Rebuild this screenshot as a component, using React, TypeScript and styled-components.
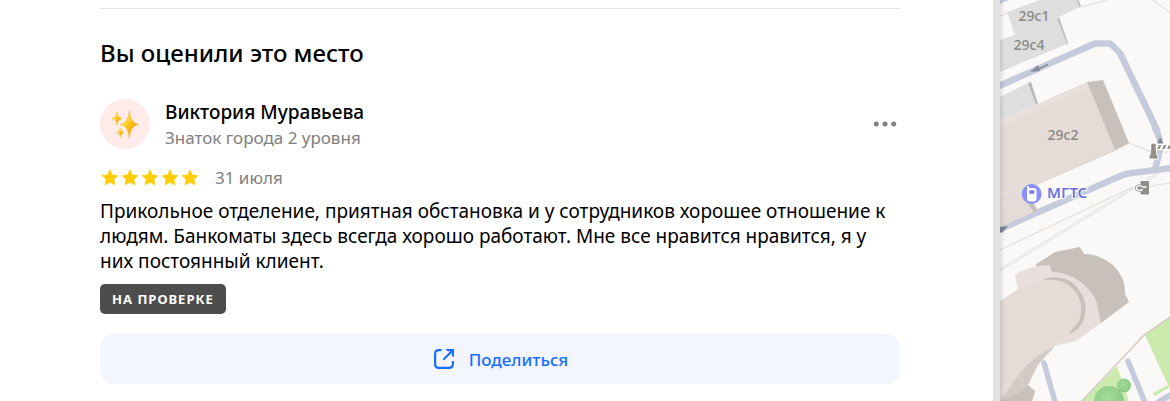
import React from 'react';
import styled, { createGlobalStyle } from 'styled-components';

const GlobalStyle = createGlobalStyle`
  * { box-sizing: border-box; }
  body {
    margin: 0;
    background: #fff;
    color: #000;
    font-family: "Noto Sans", "Open Sans", sans-serif;
  }
`;

const Page = styled.div`
  display: grid;
  grid-template-columns: minmax(0, 1fr) 177px;
  min-height: 100vh;
`;

const Panel = styled.main`
  padding: 8px 93px 16px 100px;
`;

const ReviewSection = styled.section`
  border-top: 1px solid #e6e6e6;
  padding-top: 29px;
`;

const Title = styled.h2`
  margin: 0 0 30px;
  font-size: 24px;
  line-height: 30px;
  font-weight: 500;
`;

const Author = styled.header`
  display: flex;
  align-items: center;
  height: 52px;
`;

const Avatar = styled.svg`
  width: 50px;
  height: 50px;
  margin-right: 15px;
  flex: none;
`;

const AuthorText = styled.div`
  flex: 1;
`;

const Name = styled.div`
  font-size: 19px;
  line-height: 27px;
  font-weight: 500;
`;

const Muted = styled.div`
  font-size: 17px;
  line-height: 24px;
  color: #808080;
`;

const MoreButton = styled.button`
  display: flex;
  width: 30px;
  height: 30px;
  padding: 0;
  border: 0;
  background: none;
  cursor: pointer;
`;

const Rating = styled.div`
  display: flex;
  align-items: center;
  gap: 15px;
  margin-top: 16px;
`;

const Stars = styled.svg`
  width: 100px;
  height: 20px;
`;

const ReviewText = styled.p`
  margin: 9px 0 10px;
  font-size: 19px;
  line-height: 25px;
`;

const Status = styled.span`
  display: block;
  width: fit-content;
  padding: 0 12px;
  border-radius: 5px;
  background: #4d4d4d;
  color: #fff;
  font-size: 13px;
  line-height: 30px;
  font-weight: 700;
  letter-spacing: 1px;
  text-transform: uppercase;
`;

const ShareButton = styled.button`
  display: flex;
  align-items: center;
  justify-content: center;
  gap: 13px;
  width: 100%;
  height: 50px;
  margin-top: 20px;
  padding: 0;
  border: 0;
  border-radius: 14px;
  background: #f3f6ff;
  color: #196dff;
  font-family: inherit;
  font-size: 17px;
  font-weight: 500;
  cursor: pointer;
`;

const MapPane = styled.aside`
  display: flex;
  overflow: hidden;
  border-left: 7px solid #e3e3e3;
  background: #faf9f7;
`;

const MapCanvas = styled.svg`
  width: 100%;
  flex: 1;
  font-family: "Noto Sans", sans-serif;
`;

const HouseLabel = styled.text`
  font-size: 14px;
  font-weight: 500;
  fill: #8a8684;
  text-anchor: middle;
`;

const PlaceLabel = styled.text`
  font-size: 15px;
  font-weight: 600;
  fill: #6a6fe0;
  stroke: #fff;
  stroke-width: 2px;
  paint-order: stroke;
`;

const sparkle = (x: number, y: number, w: number, h: number) =>
  `M${x} ${y - h}Q${x + w * 0.12} ${y - h * 0.1} ${x + w} ${y}Q${x + w * 0.12} ${y + h * 0.1} ${x} ${y + h}Q${x - w * 0.12} ${y + h * 0.1} ${x - w} ${y}Q${x - w * 0.12} ${y - h * 0.1} ${x} ${y - h}Z`;

function SparklesAvatar() {
  return (
    <Avatar viewBox="0 0 50 50" aria-hidden="true">
      <defs>
        <linearGradient id="gold" x1="0" y1="0" x2="1" y2="1">
          <stop offset="0.3" stopColor="#ffe14a" />
          <stop offset="0.5" stopColor="#fcc21b" />
          <stop offset="0.8" stopColor="#f39c12" />
        </linearGradient>
      </defs>
      <circle cx="25" cy="25" r="25" fill="#ffebea" />
      <g fill="url(#gold)" stroke="#fbc02d" strokeWidth="0.7" strokeLinejoin="round">
        <path d={sparkle(29.3, 25.5, 9, 13.5)} />
        <path d={sparkle(17, 19.5, 5, 6.5)} />
        <path d={sparkle(20.5, 33.5, 3.6, 4.8)} />
      </g>
    </Avatar>
  );
}

function FiveStars() {
  return (
    <Stars viewBox="0 0 100 20" role="img" aria-label="Оценка 5 из 5">
      {[10, 30, 50, 70, 90].map((x) => (
        <path
          key={x}
          transform={`translate(${x} 10)`}
          d="M0-8.2 2.4-3 8-2.5 3.9 1.4 5.1 7 0 4.3-5.1 7-3.9 1.4-8-2.5-2.4-3Z"
          fill="#fc0"
          stroke="#fc0"
          strokeWidth="0.6"
          strokeLinejoin="round"
        />
      ))}
    </Stars>
  );
}

function CityMap() {
  return (
    <MapCanvas viewBox="0 0 170 401" preserveAspectRatio="xMinYMin slice" role="img" aria-label="Карта">
      <defs>
        <linearGradient id="edge" x1="0" x2="1" y1="0" y2="0">
          <stop offset="0" stopColor="#000" stopOpacity="0.1" />
          <stop offset="1" stopColor="#000" stopOpacity="0" />
        </linearGradient>
        <radialGradient id="tree" cx="0.45" cy="0.4" r="0.6">
          <stop offset="0" stopColor="#a3dc9b" />
          <stop offset="1" stopColor="#8aca84" />
        </radialGradient>
      </defs>
      <rect width="170" height="401" fill="#faf9f7" />

      <path d="M0 270 160 172 170 165" fill="none" stroke="#efedeb" strokeWidth="3.5" />
      <g fill="none" stroke="#ddd3cd" strokeWidth="1.2" strokeDasharray="1.5 0.8">
        <path d="M0 16 8 13M81 7 107 0M153 0 170 13M129 143 151 152 170 152M0 250 133 187M143 187 170 183" />
      </g>

      <g fill="none" stroke="#c5cbdc" strokeWidth="6.5" strokeLinejoin="round">
        <path d="M-2 1 8 -3" />
        <path d="M-2 86.5 95 43.5H110L120 53 158 132" />
        <path d="M154 126Q162 140 160 149L155 170" />
        <path d="M-2 230 118 177Q126 173 136 172.5L172 168" />
      </g>

      <path d="M77 0 80 7 M58 18 67 44" stroke="#bdbdbd" strokeWidth="2.5" />
      <path d="M7 12 40 0H77L79 7 57 18 67 44 0 72V40L15 35Z" fill="#dedede" />
      <path d="M28 83 31 82 38 104 34 105Z" fill="#b9b7b6" />
      <path d="M0 97 28 83 36 104 0 121Z" fill="#dedede" />

      <path d="M0 121 87 82 116 150 0 200Z" fill="#e5dcd8" />
      <path d="M0 121 87 82 89 87 0 127Z" fill="#e9e0dd" />
      <path d="M87 82 103 80 129 143 115 150Z" fill="#c8c0bb" />
      <path d="M0 200 28 189 34 212 0 227Z" fill="#e5dcd8" />
      <path d="M28 204 33 202 38 211 34 213Z" fill="#c8c0bb" />
      <path d="M0 200.5 116 150 129 143.5" fill="none" stroke="#cdbfb7" strokeWidth="0.8" strokeDasharray="1.5 0.8" />

      <path d="M48 64.5 38 69" stroke="#858b9b" strokeWidth="1.5" />
      <path d="M30 72 38 65 40 71Z" fill="#858b9b" />
      <path d="M0 227 8 226 2 233 0 232Z" fill="#7f8594" />
      <path d="M160 137 164 145H157Z" fill="#7f8594" />

      <g fill="none" stroke="#c5cbdc" strokeWidth="5.5" strokeLinecap="round">
        <path d="M44 363 56 405" />
        <path d="M128 361 146 405" />
      </g>
      <path d="M157 403 172 394" stroke="#c5cbdc" strokeWidth="6" />

      <path d="M35 265 55 252 80 247 84 254Q91 254 97 256 105 259 113 265 126 278 125 294L129 302 101 323 80 310 50 275Z" fill="#c8c0bb" />
      <path d="M15 275 18 273Q32 265 50 265L52 272Q66 272 78 280 97 294 98 309L101 323 76 341 55 346 20 300Z" fill="#e8dfdd" />
      <path d="M44 279Q62 274 74 284 90 300 84 319 80 330 68 335L50 300Z" fill="#c8c0bb" />
      <path d="M0 301 20 288 44 280Q63 278 72 288 86 302 79 321L68 335 55 346 40 360 26 386 0 401Z" fill="#e5dcd8" />
      <path d="M55 346Q32 357 20 373L0 401H32L35 391 28 385 38 365Z" fill="#d3cac5" />
      <path d="M20 393 28 386 35 391 32 401H0Z" fill="#c8c0bb" />

      <path d="M145 335 170 317V387L155 396 153 393 168 385Z" fill="#cbeaae" />
      <path d="M117 366 127 395 129 401H82Z" fill="#cbeaae" />
      <path d="M170 317 144 335 81 402" fill="none" stroke="#d6c9c2" strokeWidth="1.5" />
      <circle cx="109" cy="401" r="15" fill="url(#tree)" />
      <circle cx="124" cy="385.5" r="7" fill="url(#tree)" />

      <g stroke="#fff" strokeWidth="2" fill="#918d89" paintOrder="stroke">
        <path d="M149.500 158.500V155.500H150.500L151.500 147 151 146Q151 143.500 153.500 143.500T156 146L155.500 147 156.500 155.500H157.500V158.500Z" />
        <path d="M157 144.500H170V149H157Z" fill="#fff" />
        <path d="M140.500 181H149V194.500H140.500V191.500H138Q135 191 135 188T138 184.500H140.500Z" />
      </g>
      <path
        d="M157 149 159 145H161.500L159.500 149ZM162 149 164 145H166.500L164.500 149ZM167 149 169 145H171.500L169.500 149Z"
        fill="#918d89"
      />
      <path d="M146.500 187H143.500L141 185.800H138.500Q136.500 186 136.500 188T138.500 190.200H142V188.500" fill="none" stroke="#fff" strokeWidth="1.300" />

      <HouseLabel x="34" y="21">29с1</HouseLabel>
      <HouseLabel x="29" y="50">29с4</HouseLabel>
      <HouseLabel x="63" y="140">29с2</HouseLabel>

      <circle cx="31.7" cy="194" r="9.900" fill="#8890ff" />
      <rect x="27" y="188" width="9.500" height="13.500" rx="3" fill="#fff" />
      <path d="M28 186V191" stroke="#fff" strokeWidth="1.800" />
      <rect x="29.300" y="190.300" width="5" height="3.500" fill="#737bf0" />
      <PlaceLabel x="47" y="198">МГТС</PlaceLabel>

      <rect width="5" height="401" fill="url(#edge)" />
    </MapCanvas>
  );
}

export default function App() {
  return (
    <>
      <GlobalStyle />
      <Page>
        <Panel>
          <ReviewSection>
            <Title>Вы оценили это место</Title>
            <Author>
              <SparklesAvatar />
              <AuthorText>
                <Name>Виктория Муравьева</Name>
                <Muted>Знаток города 2 уровня</Muted>
              </AuthorText>
              <MoreButton type="button" aria-label="Ещё">
                <svg width="30" height="30" viewBox="0 0 30 30" fill="#808080" aria-hidden="true">
                  <circle cx="6.3" cy="15" r="2.5" />
                  <circle cx="15" cy="15" r="2.5" />
                  <circle cx="23.7" cy="15" r="2.5" />
                </svg>
              </MoreButton>
            </Author>
            <Rating>
              <FiveStars />
              <Muted>31 июля</Muted>
            </Rating>
            <ReviewText>
              Прикольное отделение, приятная обстановка и у сотрудников хорошее отношение к людям.
              Банкоматы здесь всегда хорошо работают. Мне все нравится нравится, я у них постоянный
              клиент.
            </ReviewText>
            <Status>На проверке</Status>
            <ShareButton type="button">
              <svg width="24" height="24" viewBox="0 0 24 24" fill="none" stroke="#196dff" strokeWidth="2.200" aria-hidden="true">
                <path d="M9.500 3.100H7Q3.100 3.100 3.100 7V17Q3.100 20.900 7 20.900H17Q20.900 20.900 20.900 17V14" />
                <path d="M12 12 19.500 4.500" strokeLinecap="round" />
                <path d="M13.500 2H22V10.500L19.800 8.500V5.500L18.500 4.200H15.500Z" fill="#196dff" stroke="none" />
              </svg>
              Поделиться
            </ShareButton>
          </ReviewSection>
        </Panel>
        <MapPane>
          <CityMap />
        </MapPane>
      </Page>
    </>
  );
}
